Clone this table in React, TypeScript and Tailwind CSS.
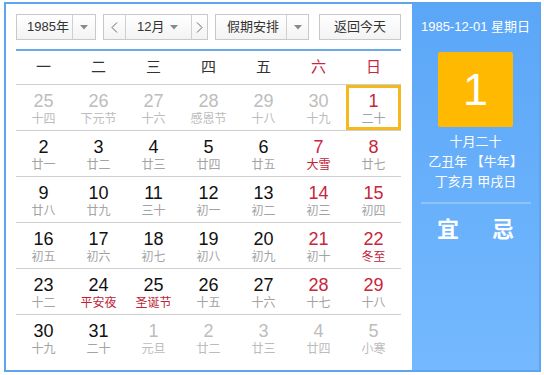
import React from "react";

type Cell = { d: number; l: string; other?: boolean; fest?: boolean };

const rows: Cell[][] = [
  [
    { d: 25, l: "十四", other: true },
    { d: 26, l: "下元节", other: true },
    { d: 27, l: "十六", other: true },
    { d: 28, l: "感恩节", other: true },
    { d: 29, l: "十八", other: true },
    { d: 30, l: "十九", other: true },
    { d: 1, l: "二十" },
  ],
  [
    { d: 2, l: "廿一" },
    { d: 3, l: "廿二" },
    { d: 4, l: "廿三" },
    { d: 5, l: "廿四" },
    { d: 6, l: "廿五" },
    { d: 7, l: "大雪", fest: true },
    { d: 8, l: "廿七" },
  ],
  [
    { d: 9, l: "廿八" },
    { d: 10, l: "廿九" },
    { d: 11, l: "三十" },
    { d: 12, l: "初一" },
    { d: 13, l: "初二" },
    { d: 14, l: "初三" },
    { d: 15, l: "初四" },
  ],
  [
    { d: 16, l: "初五" },
    { d: 17, l: "初六" },
    { d: 18, l: "初七" },
    { d: 19, l: "初八" },
    { d: 20, l: "初九" },
    { d: 21, l: "初十" },
    { d: 22, l: "冬至", fest: true },
  ],
  [
    { d: 23, l: "十二" },
    { d: 24, l: "平安夜", fest: true },
    { d: 25, l: "圣诞节", fest: true },
    { d: 26, l: "十五" },
    { d: 27, l: "十六" },
    { d: 28, l: "十七" },
    { d: 29, l: "十八" },
  ],
  [
    { d: 30, l: "十九" },
    { d: 31, l: "二十" },
    { d: 1, l: "元旦", other: true },
    { d: 2, l: "廿二", other: true },
    { d: 3, l: "廿三", other: true },
    { d: 4, l: "廿四", other: true },
    { d: 5, l: "小寒", other: true },
  ],
];

const weekdays = ["一", "二", "三", "四", "五", "六", "日"];

const cjk = { fontFamily: '"Liberation Sans", "Noto Sans CJK SC", sans-serif' };

function Caret() {
  return (
    <svg width="8" height="5" viewBox="0 0 8 5">
      <path d="M0 0 L8 0 L4 4.5 Z" fill="#8a8a8a" />
    </svg>
  );
}

export default function App() {
  return (
    <div className="pl-[4px] pt-[2px] bg-white w-[544px] h-[375px]" style={cjk}>
      <div className="w-[537px] h-[370px] border-2 border-[#5ea4ee] flex bg-white">
        {/* Left */}
        <div className="w-[406px] pl-[10px] pt-[10px]">
          <div className="flex h-[26px] text-[13px] text-[#333]">
            <div className="w-[80px] flex border border-[#c9c9c9] bg-gradient-to-b from-white to-[#f3f3f3]">
              <div className="w-[55px] flex items-center pl-[10px]">1985年</div>
              <div className="flex-1 border-l border-[#d0d0d0] flex items-center justify-center">
                <Caret />
              </div>
            </div>
            <div className="ml-[7px] w-[105px] flex border border-[#c9c9c9] bg-gradient-to-b from-white to-[#f3f3f3]">
              <div className="w-[22px] border-r border-[#d0d0d0] flex items-center justify-center text-[#555]">
                <svg width="7" height="11" viewBox="0 0 7 11">
                  <path d="M6 0.5 L1 5.5 L6 10.5" fill="none" stroke="#666" strokeWidth="1" />
                </svg>
              </div>
              <div className="flex-1 flex items-center pl-[11px]">
                <span>12月</span>
                <span className="ml-[6px] flex items-center">
                  <Caret />
                </span>
              </div>
              <div className="w-[16px] border-l border-[#d0d0d0] flex items-center justify-center">
                <svg width="7" height="11" viewBox="0 0 7 11">
                  <path d="M1 0.5 L6 5.5 L1 10.5" fill="none" stroke="#666" strokeWidth="1" />
                </svg>
              </div>
            </div>
            <div className="ml-[7px] w-[94px] flex border border-[#c9c9c9] bg-gradient-to-b from-white to-[#f3f3f3]">
              <div className="w-[70px] flex items-center pl-[11px]">假期安排</div>
              <div className="flex-1 border-l border-[#d0d0d0] flex items-center justify-center">
                <Caret />
              </div>
            </div>
            <div className="ml-[10px] w-[82px] flex items-center justify-center border border-[#c9c9c9] bg-gradient-to-b from-white to-[#f3f3f3]">
              返回今天
            </div>
          </div>

          <div className="mt-[9px] w-[385px] h-[2px] bg-[#6aaae8]" />

          <div className="w-[385px]">
            <div className="grid grid-cols-7 h-[34px] border-b border-[#cfcfcf] text-[15px]">
              {weekdays.map((w, i) => (
                <div
                  key={w}
                  className={`flex items-center justify-center ${i >= 5 ? "text-[#c5283d]" : "text-[#333]"}`}
                >
                  {w}
                </div>
              ))}
            </div>
            {rows.map((row, ri) => (
              <div
                key={ri}
                className={`grid grid-cols-7 h-[46px] ${ri < rows.length - 1 ? "border-b border-[#cfcfcf]" : ""}`}
              >
                {row.map((c, ci) => {
                  const sel = ri === 0 && ci === 6;
                  const weekend = ci >= 5;
                  const numColor = c.other
                    ? "text-[#bdbdbd]"
                    : weekend
                    ? "text-[#c9253c]"
                    : "text-[#111]";
                  const lunColor = c.other
                    ? "text-[#bcbcbc]"
                    : c.fest
                    ? "text-[#bf2335]"
                    : "text-[#a3a3a3]";
                  return (
                    <div
                      key={ci}
                      className={`flex flex-col items-center ${
                        sel ? "border-[3px] border-[#f6b91d] pt-[3px]" : "pt-[6px]"
                      }`}
                    >
                      <div
                        className={`text-[18px] leading-[20px] ${numColor}`}
                        style={{ fontFamily: '"Liberation Sans", Arial, sans-serif' }}
                      >
                        {c.d}
                      </div>
                      <div className={`text-[12px] leading-[16px] ${lunColor}`}>{c.l}</div>
                    </div>
                  );
                })}
              </div>
            ))}
          </div>
        </div>

        {/* Right panel */}
        <div className="flex-1 bg-gradient-to-b from-[#5ba6f7] to-[#74b9ff] flex flex-col items-center text-white pt-[14px]">
          <div className="text-[13px] leading-[18px]">1985-12-01 星期日</div>
          <div className="mt-[16px] w-[75px] h-[75px] bg-[#ffb900] rounded-[2px] flex items-center justify-center">
            <span
              className="text-[45px] leading-none"
              style={{ fontFamily: '"Liberation Sans", Arial, sans-serif' }}
            >
              1
            </span>
          </div>
          <div className="mt-[5px] text-[13px] leading-[20px]">十月二十</div>
          <div className="text-[13px] leading-[20px]">乙丑年 【牛年】</div>
          <div className="text-[13px] leading-[20px]">丁亥月 甲戌日</div>
          <div className="mt-[10px] w-[110px] h-[2px] bg-[#8cc4fb]" />
          <div className="mt-[11px] flex gap-[33px] text-[22px] leading-[30px] font-bold">
            <span>宜</span>
            <span>忌</span>
          </div>
        </div>
      </div>
    </div>
  );
}
